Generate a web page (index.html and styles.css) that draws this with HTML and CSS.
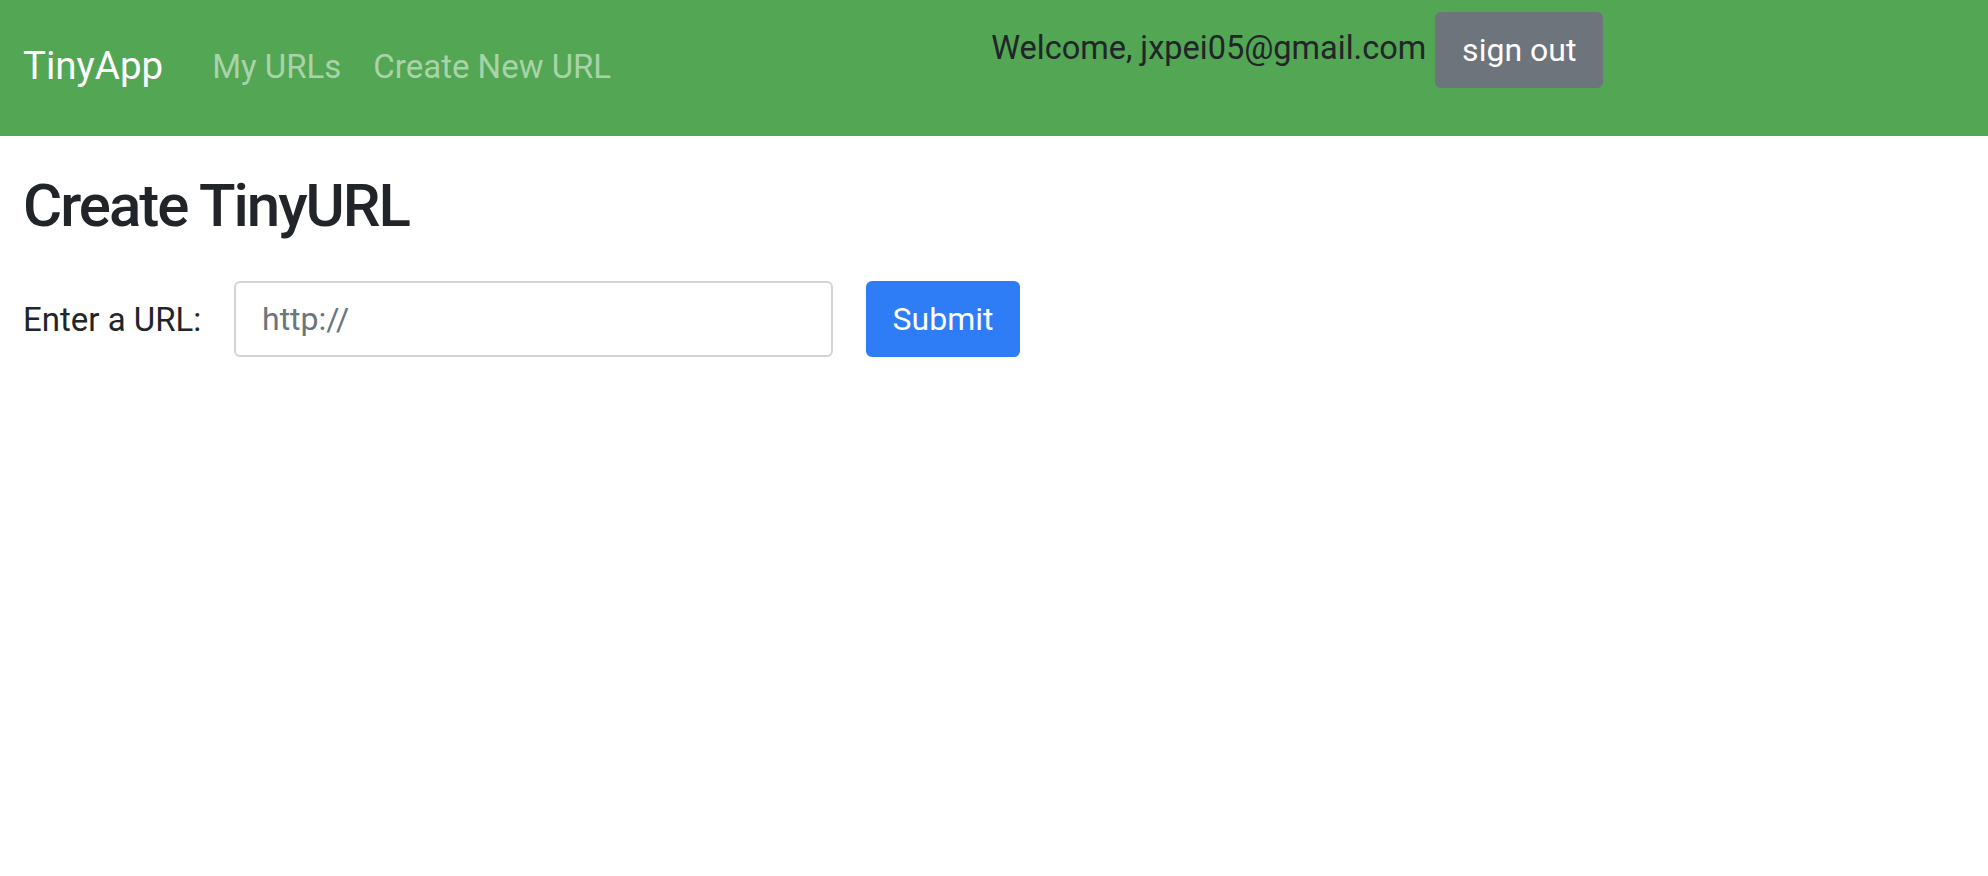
FILE: index.html
```html
<!DOCTYPE html>
<html lang="en">
<head>
<meta charset="utf-8">
<title>TinyApp</title>
<link rel="stylesheet" href="styles.css">
</head>
<body>
<nav class="navbar">
  <a class="brand" href="#">TinyApp</a>
  <ul class="nav-links">
    <li><a href="#">My URLs</a></li>
    <li><a href="#">Create New URL</a></li>
  </ul>
  <form class="user">
    <span class="welcome">Welcome, jxpei05@gmail.com</span>
    <button type="button" class="btn btn-secondary">sign out</button>
  </form>
</nav>
<main class="container">
  <h1 class="title">Create TinyURL</h1>
  <form class="url-form">
    <label class="label" for="longURL">Enter a URL:</label>
    <input class="input" id="longURL" type="text" placeholder="http://">
    <button type="button" class="btn btn-primary">Submit</button>
  </form>
</main>
</body>
</html>
```
FILE: styles.css
```css
* { box-sizing: border-box; }
html, body { margin: 0; padding: 0; }
body {
  font-family: Roboto, "Liberation Sans", Arial, sans-serif;
  color: #212529;
  background: #fff;
  font-size: 32px;
}
.navbar {
  display: flex;
  align-items: flex-start;
  height: 136px;
  background: #53a653;
  padding-left: 23px;
}
.brand {
  align-self: center;
  font-size: 38.5px;
  line-height: 1;
  color: #fff;
  text-decoration: none;
  margin-top: -4px;
}
.nav-links {
  align-self: center;
  display: flex;
  gap: 32px;
  list-style: none;
  margin: -2px 0 0 49px;
  padding: 0;
}
.nav-links a {
  font-size: 33px;
  line-height: 1;
  color: #a9d3a9;
  text-decoration: none;
}
.user {
  display: flex;
  align-items: flex-start;
  gap: 9px;
  margin: 12px 0 0 380px;
}
.welcome {
  font-size: 32.5px;
  line-height: 1;
  margin-top: 20px;
  color: #212529;
}
.btn {
  font-family: inherit;
  font-size: 32px;
  line-height: 1;
  border: none;
  border-radius: 6px;
  color: #fff;
  height: 76px;
  cursor: pointer;
}
.btn-secondary {
  background: #6d747c;
  width: 168px;
}
.btn-primary {
  background: #2f7df6;
  width: 154px;
}
.container {
  padding: 0 23px;
}
.title {
  font-size: 60px;
  font-weight: 500;
  line-height: 1.2;
  letter-spacing: -2px;
  margin: 34px 0 0;
}
.url-form {
  display: flex;
  align-items: center;
  margin-top: 39px;
}
.label {
  font-size: 33px;
  width: 211px;
}
.input {
  width: 599px;
  height: 76px;
  border: 2px solid #cfd4d9;
  border-radius: 6px;
  padding: 0 26px;
  font-family: inherit;
  font-size: 32px;
  color: #495057;
  margin-right: 33px;
}
.input::placeholder { color: #6c757d; }
```
